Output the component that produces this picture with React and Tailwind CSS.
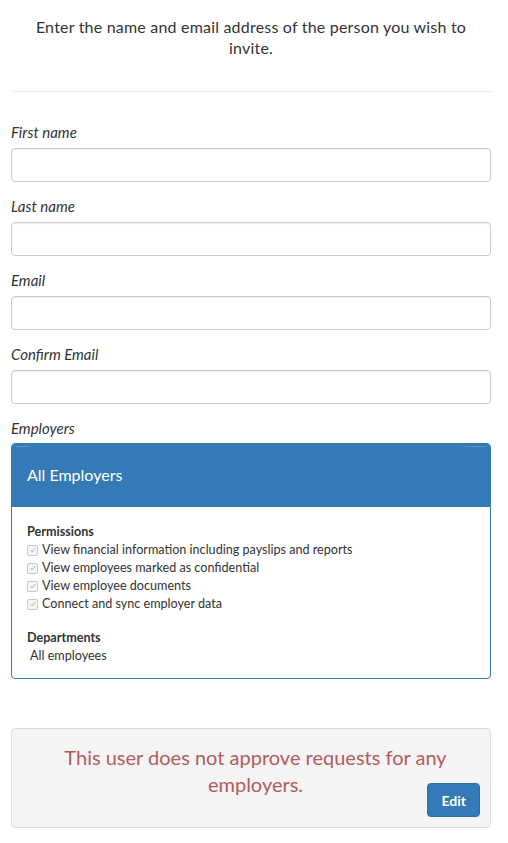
import React from 'react'

const fields = ['First name', 'Last name', 'Email', 'Confirm Email']

const permissions = [
    'View financial information including payslips and reports',
    'View employees marked as confidential',
    'View employee documents',
    'Connect and sync employer data',
]

const CheckBox = () => (
    <span className="inline-flex w-[11px] h-[11px] mr-[4px] items-center justify-center rounded-[2px] border border-[#c8c8c8] bg-[#f6f6f6] shrink-0">
        <svg viewBox="0 0 10 10" className="w-[8px] h-[8px]">
            <path d="M2 5.2 L4 7.2 L8 2.6" fill="none" stroke="#a8a8a8" strokeWidth="1.2" />
        </svg>
    </span>
)

const App = () => {
    return (
        <div className="bg-white min-h-[843px] pl-[11px] pr-[17px] text-[#333] font-['Lato','Noto_Sans',sans-serif]">
            <p className="pt-[16px] text-center text-[16px] leading-[21px] tracking-[0.2px] px-[20px]">
                Enter the name and email address of the person you wish to invite.
            </p>
            <hr className="mt-[33px] border-t border-[#e6e6e6]" />

            <div className="mt-[30px]">
                {fields.map((label, i) => (
                    <div key={i} className="mb-[14px]">
                        <label className="block italic text-[15px] leading-[20px] mb-[6px]">{label}</label>
                        <input type="text" className="block w-full h-[34px] rounded-[4px] border border-[#ccc] bg-white shadow-[inset_0_1px_1px_rgba(0,0,0,0.075)]" />
                    </div>
                ))}
            </div>

            <label className="block italic text-[15px] leading-[20px] mb-[5px]">Employers</label>
            <div className="rounded-[4px] border border-[#337ab7] overflow-hidden">
                <div className="relative bg-[#337ab7] h-[63px] flex items-center px-[15px]">
                    <span className="absolute left-[3px] top-[2px] w-[14px] h-[1px] bg-[#6b9ccb] opacity-70" />
                    <span className="absolute right-[3px] top-[2px] w-[22px] h-[1px] bg-[#6b9ccb] opacity-70" />
                    <h3 className="text-white text-[16px] leading-[20px] -mt-[2px]">All Employers</h3>
                </div>
                <div className="px-[15px] pt-[16px] pb-[13px] text-[12.6px] leading-[18px]">
                    <div className="font-bold">Permissions</div>
                    {permissions.map((p, i) => (
                        <div key={i} className="flex items-center">
                            <CheckBox />
                            <span>{p}</span>
                        </div>
                    ))}
                    <div className="font-bold mt-[16px]">Departments</div>
                    <div className="pl-[3px]">All employees</div>
                </div>
            </div>

            <div className="mt-[49px] bg-[#f4f4f4] border border-[#ddd] rounded-[4px] pl-[19px] pr-[10px] pt-[15px] pb-[10px]">
                <p className="text-center text-[#b35c5c] text-[20px] leading-[27px] px-[20px]">
                    This user does not approve requests for any employers.
                </p>
                <div className="flex justify-end -mt-[15px]">
                    <button className="bg-[#337ab7] text-white text-[14px] font-bold px-[13px] h-[34px] rounded-[4px] border border-[#2e6da4]">
                        Edit
                    </button>
                </div>
            </div>
        </div>
    )
}

export default App
